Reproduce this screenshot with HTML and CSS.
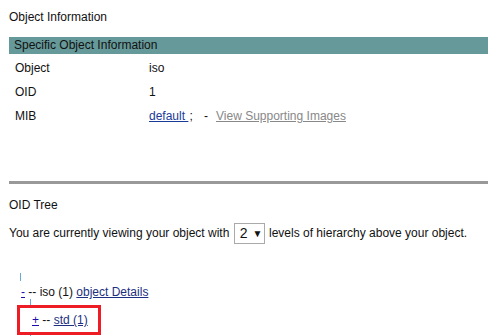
FILE: index.html
```html
<!DOCTYPE html>
<html lang="en">
<head>
    <meta charset="UTF-8">
    <title>Object Information</title>
    <link rel="stylesheet" href="styles.css">
</head>
<body>
    <div class="section">
        <div class="heading">Object Information</div>
        <div class="bar">Specific Object Information</div>
        <table class="info">
            <tr><td class="label">Object</td><td>iso</td></tr>
            <tr><td class="label">OID</td><td>1</td></tr>
            <tr>
                <td class="label">MIB</td>
                <td><a href="#" class="mib">default </a>; <span class="sep">-</span><a href="#" class="images">View Supporting Images</a></td>
            </tr>
        </table>
    </div>

    <div class="rule"></div>

    <div class="section tree-section">
        <div class="heading">OID Tree</div>
        <div class="levels">
            You are currently viewing your object with
            <span class="select">2<span class="arrow">&#9660;</span></span>
            levels of hierarchy above your object.
        </div>

        <div class="tree">
            <div class="stem"></div>
            <div class="node"><a href="#" class="toggle">-</a> -- iso (1) <a href="#" class="node-link">object Details</a></div>
            <div class="stem child"></div>
            <div class="highlight">
                <div class="node"><a href="#" class="toggle">+</a> -- <a href="#" class="node-link">std (1)</a></div>
            </div>
            <div class="stem child"></div>
        </div>
    </div>
</body>
</html>
```

FILE: styles.css
```css
body {
    font-family: "Liberation Sans", Arial, sans-serif;
    font-size: 12px;
    color: #111;
    margin: 0;
    padding: 0 0 0 9px;
    background: #fff;
    overflow: hidden;
}

a {
    color: #1a0dab;
}

.heading {
    height: 14px;
    line-height: 14px;
}

.section:first-child .heading {
    margin-top: 10px;
}

.bar {
    margin-top: 13px;
    height: 17px;
    line-height: 17px;
    padding-left: 5px;
    background: #669999;
    color: #111;
}

.info {
    border-collapse: collapse;
    margin-top: 2px;
}

.info td {
    height: 24px;
    padding: 0 0 0 6px;
}

.info td.label {
    width: 128px;
}

.info .mib {
    color: #1a3a9a;
    margin-right: 1px;
}

.info .sep {
    margin: 0 8px 0 8px;
}

.info .images {
    color: #888;
}

.rule {
    margin-top: 53px;
    height: 3px;
    background: #999;
}

.tree-section .heading {
    margin-top: 14px;
}

.levels {
    margin-top: 10px;
    height: 22px;
    line-height: 22px;
}

.select {
    display: inline-block;
    box-sizing: border-box;
    width: 31px;
    height: 21px;
    line-height: 19px;
    padding-left: 5px;
    border: 1px solid #aaa;
    font-size: 14px;
    vertical-align: middle;
    margin: 0 1px;
}

.select .arrow {
    font-size: 10px;
    margin-left: 5px;
    vertical-align: top;
}

.tree {
    margin-top: 29px;
}

.stem {
    width: 1px;
    height: 8px;
    margin-left: 11px;
    background: #6aa8d8;
}

.stem.child {
    margin-left: 21px;
    height: 6px;
}

.node {
    margin-top: 4px;
    padding-left: 12px;
    height: 14px;
    line-height: 14px;
}

.node .node-link {
    color: #1c2f80;
}

.highlight {
    width: 78px;
    height: 24px;
    margin-left: 8px;
    border: 3px solid #ee1c25;
    display: flex;
    align-items: center;
}

.highlight .node {
    margin-top: 0;
    padding-left: 12px;
}
```
